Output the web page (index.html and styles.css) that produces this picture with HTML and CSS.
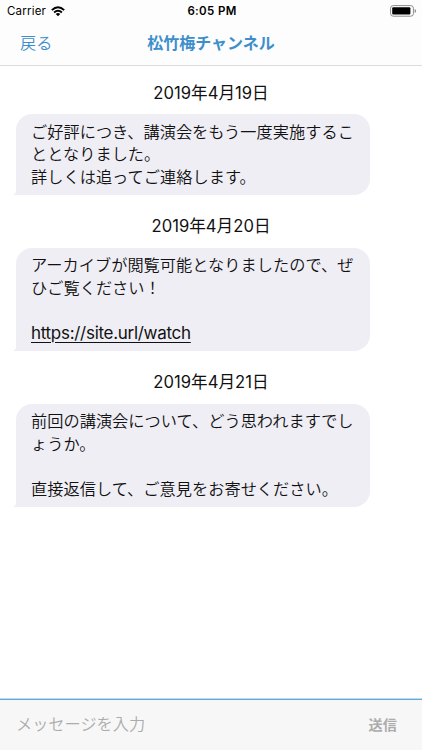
FILE: index.html
```html
<!DOCTYPE html>
<html lang="ja">
<head>
<meta charset="utf-8">
<title>松竹梅チャンネル</title>
<link rel="stylesheet" href="styles.css">
</head>
<body>
<header class="top">
  <div class="status">
    <div class="carrier"><span class="carrier-name">Carrier</span>
      <svg class="wifi" width="14" height="11" viewBox="0 0 14 11" fill="none" stroke="#000" stroke-width="1.9"><path d="M.8 4.1Q7-1.7 13.2 4.1M3.1 6.5Q7 3 10.9 6.5"/><path d="M4.7 8Q7 6.1 9.3 8L7 10.3Z" fill="#000" stroke="none"/></svg>
    </div>
    <div class="clock">6:05 PM</div>
    <svg class="battery" width="27" height="12" viewBox="0 0 27 12"><rect x=".6" y=".6" width="22.8" height="10.6" rx="2.6" fill="#fff" stroke="#8c8c8c"/><rect x="2.2" y="2.2" width="18.2" height="7.4" rx="1" fill="#000"/><path d="M24.6 4v4q1.5-.6 1.5-2t-1.5-2Z" fill="#8c8c8c"/></svg>
  </div>
  <nav class="nav"><span class="back">戻る</span><h1 class="title">松竹梅チャンネル</h1><span></span></nav>
</header>
<main class="messages">
  <div class="date">2019年4月19日</div>
  <div class="bubble">ご好評につき、講演会をもう一度実施するこ<br>ととなりました。<br>詳しくは追ってご連絡します。<svg class="tail" width="12" height="10" viewBox="0 0 12 10"><path d="M3.8 0V3Q3.8 7.6 0 10H12V0Z"/></svg></div>
  <div class="date">2019年4月20日</div>
  <div class="bubble">アーカイブが閲覧可能となりましたので、ぜ<br>ひご覧ください！<br><br><span class="link">https://site.url/watch</span><svg class="tail" width="12" height="10" viewBox="0 0 12 10"><path d="M3.8 0V3Q3.8 7.6 0 10H12V0Z"/></svg></div>
  <div class="date">2019年4月21日</div>
  <div class="bubble">前回の講演会について、どう思われますでし<br>ょうか。<br><br>直接返信して、ご意見をお寄せください。<svg class="tail" width="12" height="10" viewBox="0 0 12 10"><path d="M3.8 0V3Q3.8 7.6 0 10H12V0Z"/></svg></div>
</main>
<footer class="composer"><span class="placeholder">メッセージを入力</span><span class="send">送信</span></footer>
</body>
</html>
```
FILE: styles.css
```css
* { box-sizing: border-box; }
body {
  margin: 0;
  height: 750px;
  display: flex;
  flex-direction: column;
  overflow: hidden;
  background: #fff;
  color: #111;
  font-family: Inter, "Noto Sans CJK JP", sans-serif;
  font-size: 16.2px;
}
.top {
  height: 66px;
  flex: none;
  background: #fdfdfd;
  border-bottom: 1px solid #dcdcdc;
}
.status {
  display: grid;
  grid-template-columns: 1fr auto 1fr;
  align-items: center;
  height: 22px;
  padding: 0 5px 0 7px;
  color: #000;
  font-size: 11.5px;
}
.carrier { display: flex; align-items: center; gap: 5px; }
.carrier-name { letter-spacing: .2px; }
.clock { font-weight: 600; letter-spacing: .35px; }
.battery { justify-self: end; }
.nav {
  display: grid;
  grid-template-columns: 1fr auto 1fr;
  align-items: center;
  height: 40px;
  padding: 0 20px;
  color: #3d8fcc;
}
.title { margin: 0; font-size: 16px; font-weight: 700; }
.back { font-size: 16.2px; font-weight: 350; }
.messages { flex: 1; padding-top: 15px; }
.date {
  height: 24px;
  margin-bottom: 9.3px;
  line-height: 24px;
  text-align: center;
  font-size: 16.6px;
  font-weight: 400;
  letter-spacing: .03px;
}
.bubble {
  position: relative;
  width: 353.5px;
  margin: 0 0 19.7px 16.3px;
  padding: 6.5px 0 6.5px 14.7px;
  border-radius: 16px 16px 16px 0;
  background: #efeef5;
  line-height: 22.5px;
  white-space: nowrap;
  font-weight: 350;
  letter-spacing: .04px;
}
.tail { position: absolute; left: -3.8px; bottom: 0; fill: #efeef5; }
.link {
  font-size: 17px;
  font-weight: 400;
  letter-spacing: -.29px;
  text-decoration: underline;
  text-underline-offset: 3px;
  text-decoration-thickness: 1px;
}
.composer {
  display: flex;
  flex: none;
  align-items: center;
  justify-content: space-between;
  height: 52px;
  padding: 0 25px 4px 16px;
  border-top: 1px solid #b4def7;
  box-shadow: inset 0 1px #69a7d3;
  background: #f7f7f7;
  color: #acacac;
}
.placeholder { font-weight: 350; }
.send { padding-top: 3px; font-size: 14.2px; font-weight: 700; }
```
